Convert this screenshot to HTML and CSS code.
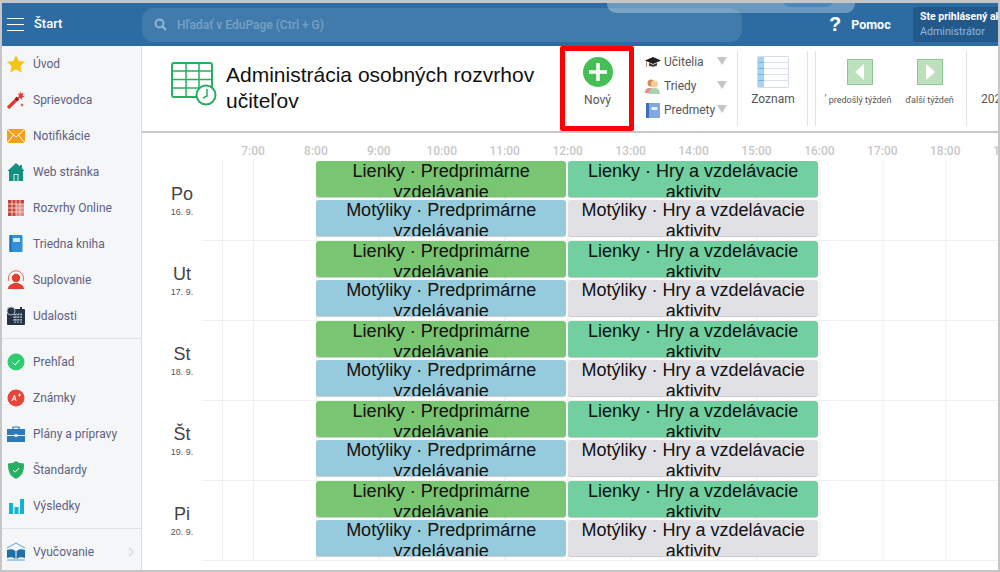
FILE: index.html
```html
<!DOCTYPE html>
<html lang="sk">
<head>
<meta charset="utf-8">
<title>Administrácia osobných rozvrhov učiteľov</title>
<link rel="stylesheet" href="styles.css">
</head>
<body>
<div class="frame">
  <header class="topbar">
    <div class="top-ghost"><div class="top-ghost-inner"></div></div>
    <div class="brand">
      <div class="burger"><span></span><span></span><span></span></div>
      <span class="brand-text">Štart</span>
    </div>
    <div class="search">
      <svg class="search-icon" width="13" height="13" viewBox="0 0 13 13"><circle cx="5.5" cy="5.5" r="4" fill="none" stroke="#93b5d1" stroke-width="2"/><path d="M8.5 8.5L12 12" stroke="#93b5d1" stroke-width="2.4"/></svg>
      <span>Hľadať v EduPage (Ctrl + G)</span>
    </div>
    <div class="help"><span class="help-q">?</span><span>Pomoc</span></div>
    <div class="user">
      <div class="user-name">Ste prihlásený ako</div>
      <div class="user-role">Administrátor</div>
    </div>
  </header>
  <div class="body">
    <nav class="sidebar">
      <div class="nav-group">
        <div class="nav-item"><svg class="ico" viewBox="0 0 20 20"><path fill="#f5c518" d="M10 1l2.7 6 6.5.7-4.9 4.3 1.4 6.5L10 15.2l-5.7 3.3 1.4-6.5L.8 7.7 7.3 7z"/></svg><span>Úvod</span></div>
        <div class="nav-item"><svg class="ico" viewBox="0 0 20 20"><path d="M2 18L12 8" stroke="#e53935" stroke-width="3.4"/><path d="M10 10l2-2" stroke="#8e1c1c" stroke-width="3.4"/><path fill="#e53935" d="M14 1l1 2.5 2.5-.5-1 2.3L18.500 7l-2.500.500L15.500 10l-1.500-2-2.500.200 1.500-2.200L12 3.500l2 .300z"/><path fill="#c0392b" d="M16 13l.6 1.400 1.400.600-1.400.600L16 17l-.6-1.400L14 15l1.400-.600z"/></svg><span>Sprievodca</span></div>
        <div class="nav-item"><svg class="ico" viewBox="0 0 20 20"><rect x="1" y="3" width="18" height="14" fill="#f6a01a"/><path d="M1 3l9 8 9-8M1 17l6.500-8M19 17l-6.500-8" fill="none" stroke="#fff" stroke-width="1"/></svg><span>Notifikácie</span></div>
        <div class="nav-item"><svg class="ico" viewBox="0 0 20 20"><path fill="#10917f" d="M10 1L1.500 9h1.500v10h14V9h1.500l-2.500-2.700V3h-2v1.500z"/><rect x="7.500" y="12" width="5" height="7" fill="#d5f0ea"/><rect x="8.500" y="13" width="3" height="6" fill="#10917f"/></svg><span>Web stránka</span></div>
        <div class="nav-item"><svg class="ico" viewBox="0 0 20 20"><rect x="2" y="2" width="16" height="16" fill="#c0453c"/><rect x="10" y="6" width="8" height="12" fill="#e9a9a3" opacity=".7"/><path d="M6 2v16M10 2v16M14 2v16M2 6h16M2 10h16M2 14h16" stroke="#f3c9c4" stroke-width="1"/></svg><span>Rozvrhy Online</span></div>
        <div class="nav-item"><svg class="ico" viewBox="0 0 20 20"><rect x="3.500" y="1" width="13" height="17" rx="1" fill="#2f8fd8"/><rect x="3.500" y="1" width="2" height="17" fill="#1f6fb0"/><rect x="7" y="4" width="7" height="4" fill="#cfe7f8"/></svg><span>Triedna kniha</span></div>
        <div class="nav-item"><svg class="ico" viewBox="0 0 20 20"><path fill="none" stroke="#e8604f" stroke-width="1" d="M3 11a7.500 7.500 0 1 1 14 0"/><circle cx="10" cy="8" r="4.200" fill="#e53e2f"/><path fill="#e53e2f" d="M2 19c0-4 4-5 6-6h4c2 1 6 2 6 6z"/></svg><span>Suplovanie</span></div>
        <div class="nav-item"><svg class="ico" viewBox="0 0 20 20"><rect x="1" y="3" width="18" height="16" rx="1" fill="#243447"/><path d="M7 8h10M7 11h10M7 14h10M4 11h0M9 8v9M12 8v9M15 8v9" stroke="#c9d3dd" stroke-width="1.200" stroke-dasharray="1.500 1"/><circle cx="5" cy="5" r="4" fill="#243447" stroke="#aab6c2"/><rect x="14" y="1" width="2" height="4" fill="#243447"/></svg><span>Udalosti</span></div>
      </div>
      <div class="nav-group nav-second">
        <div class="nav-item"><svg class="ico" viewBox="0 0 20 20"><circle cx="10" cy="10" r="8.500" fill="#2ecc71"/><path d="M6.500 10.500l2.500 2.500 4.500-5" fill="none" stroke="#fff" stroke-width="1"/></svg><span>Prehľad</span></div>
        <div class="nav-item"><svg class="ico" viewBox="0 0 20 20"><circle cx="10" cy="10" r="8.500" fill="#e8443a"/><path d="M6 13l2.500-6 1.500 6M7 11h3M12 7h3M13.500 5.500v3" fill="none" stroke="#fff" stroke-width="1"/></svg><span>Známky</span></div>
        <div class="nav-item"><svg class="ico" viewBox="0 0 20 20"><path d="M7 5V3h6v2" fill="none" stroke="#2b7bb9" stroke-width="1.200"/><rect x="1" y="5" width="18" height="6" fill="#2b7bb9"/><rect x="1" y="12" width="18" height="6" fill="#2b7bb9"/><rect x="8.500" y="10" width="3" height="3" fill="#cfe3f2"/></svg><span>Plány a prípravy</span></div>
        <div class="nav-item"><svg class="ico" viewBox="0 0 20 20"><path fill="#27ae60" d="M10 1c2.500 1.800 5 2.500 8 2.500 0 7-1 12-8 15.500C3 15.500 2 10.500 2 3.500 5 3.500 7.500 2.800 10 1z"/><path d="M7 10l2.200 2.200L13 8" fill="none" stroke="#fff" stroke-width="1"/></svg><span>Štandardy</span></div>
        <div class="nav-item"><svg class="ico" viewBox="0 0 20 20"><path fill="#10b5d6" d="M3 7h4v11H3zM8.500 11h4v7h-4zM14 3h4v15h-4z"/></svg><span>Výsledky</span></div>
      </div>
      <div class="nav-group nav-last">
        <div class="nav-item"><svg class="ico" viewBox="0 0 20 20"><path d="M1 6l9-5 9 5" fill="none" stroke="#5ea2d2" stroke-width="1"/><path fill="#1f6fa8" d="M1 8c3-1 6-1 8.500 1v8C7 15 4 15 1 16zM19 8c-3-1-6-1-8.500 1v8c2.500-2 5.500-2 8.500-1z"/><path d="M1 18h18" stroke="#5ea2d2"/></svg><span>Vyučovanie</span><svg class="chev" width="6" height="10" viewBox="0 0 6 10"><path d="M1 1l4 4-4 4" fill="none" stroke="#d4d6da" stroke-width="1.200"/></svg></div>
      </div>
    </nav>
    <main class="main">
      <section class="toolbar">
        <div class="title-block">
          <svg class="title-icon" width="46" height="44" viewBox="0 0 46 44">
            <rect x="1" y="1" width="40" height="34" rx="2" fill="none" stroke="#27ae60" stroke-width="2"/>
            <path d="M1 9h40M1 17.500h40M1 26h40M15 1v34M28 1v34" stroke="#27ae60" stroke-width="1.500"/>
            <circle cx="35" cy="33" r="9.500" fill="#fff" stroke="#27ae60" stroke-width="2"/>
            <path d="M36 27v7l-4 2" fill="none" stroke="#27ae60" stroke-width="1.500"/>
          </svg>
          <h1 class="title">Administrácia osobných rozvrhov učiteľov</h1>
        </div>
        <div class="new-btn">
          <svg width="30" height="30" viewBox="0 0 30 30"><circle cx="15" cy="15" r="15" fill="#43bf53"/><path d="M15 6v18M6 15h18" stroke="#fff" stroke-width="3.600"/></svg>
          <span>Nový</span>
        </div>
        <div class="filters">
          <div class="filter"><svg class="filter-ico" viewBox="0 0 16 16"><path fill="#1e1e1e" d="M8 3l8 3.500-8 3.500-8-3.500z"/><path fill="#3a3a3a" d="M4 9v2.500c2 1.500 6 1.500 8 0V9l-4 1.800z"/><path d="M1.500 7v6" stroke="#c98a5a"/></svg><span class="filter-label">Učitelia</span><span class="tri"></span></div>
          <div class="filter"><svg class="filter-ico" viewBox="0 0 16 16"><circle cx="6" cy="5" r="3.500" fill="#d48a5f"/><path fill="#e88a8a" d="M0 15c0-4 2-5 5-5s4 2 4 5z"/><circle cx="9.500" cy="6" r="3.500" fill="#f3cf9d"/><path fill="#a9d3ac" d="M4 16c0-4 2-6 5.500-6s5.500 2 5.500 6z"/></svg><span class="filter-label">Triedy</span><span class="tri"></span></div>
          <div class="filter"><svg class="filter-ico" viewBox="0 0 16 16"><rect x="1" y="1" width="14" height="15" fill="#7fa9e0"/><rect x="1" y="1" width="3" height="15" fill="#3f6fb5"/><rect x="6.500" y="5" width="6" height="3" fill="#e6effa"/></svg><span class="filter-label">Predmety</span><span class="tri"></span></div>
        </div>
        <div class="tool tool-list">
          <svg width="32" height="32" viewBox="0 0 32 32"><rect x=".5" y=".5" width="31" height="31" rx="1" fill="#fff" stroke="#d5dbe3"/><rect x="1" y="1" width="6" height="30" fill="#a9d3f3"/><path d="M1 6.500h30M1 12.500h30M1 18.500h30M1 24.500h30" stroke="#d9e3ee"/><path d="M1 6.500h6M1 12.500h6M1 18.500h6M1 24.500h6" stroke="#6fb1e6"/></svg>
          <span>Zoznam</span>
        </div>
        <div class="tool tool-prev">
          <svg width="26" height="26" viewBox="0 0 26 26"><rect x=".5" y=".5" width="25" height="25" fill="#bde0be" stroke="#93c297"/><path d="M17 5v16L8 13z" fill="#fff"/></svg>
          <span class="week-label"><span class="tick">'</span>predošlý týždeň</span>
        </div>
        <div class="tool tool-next">
          <svg width="26" height="26" viewBox="0 0 26 26"><rect x=".5" y=".5" width="25" height="25" fill="#bde0be" stroke="#93c297"/><path d="M9 5v16l9-8z" fill="#fff"/></svg>
          <span class="week-label">ďalší týždeň</span>
        </div>
        <div class="tool tool-year"><span>2024</span></div>
      </section>
      <section class="sheet">
        <div class="hours">
          <span>7:00</span><span>8:00</span><span>9:00</span><span>10:00</span><span>11:00</span><span>12:00</span><span>13:00</span><span>14:00</span><span>15:00</span><span>16:00</span><span>17:00</span><span>18:00</span><span>19:00</span>
        </div>
        <div class="days">
          <div class="day">
            <div class="day-label"><div class="day-name">Po</div><div class="day-date">16. 9.</div></div>
            <div class="lane">
              <div class="slot"><div class="card green">Lienky · Predprimárne vzdelávanie</div><div class="card blue">Motýliky · Predprimárne vzdelávanie</div></div>
              <div class="slot"><div class="card teal">Lienky · Hry a vzdelávacie aktivity</div><div class="card gray">Motýliky · Hry a vzdelávacie aktivity</div></div>
            </div>
          </div>
          <div class="day">
            <div class="day-label"><div class="day-name">Ut</div><div class="day-date">17. 9.</div></div>
            <div class="lane">
              <div class="slot"><div class="card green">Lienky · Predprimárne vzdelávanie</div><div class="card blue">Motýliky · Predprimárne vzdelávanie</div></div>
              <div class="slot"><div class="card teal">Lienky · Hry a vzdelávacie aktivity</div><div class="card gray">Motýliky · Hry a vzdelávacie aktivity</div></div>
            </div>
          </div>
          <div class="day">
            <div class="day-label"><div class="day-name">St</div><div class="day-date">18. 9.</div></div>
            <div class="lane">
              <div class="slot"><div class="card green">Lienky · Predprimárne vzdelávanie</div><div class="card blue">Motýliky · Predprimárne vzdelávanie</div></div>
              <div class="slot"><div class="card teal">Lienky · Hry a vzdelávacie aktivity</div><div class="card gray">Motýliky · Hry a vzdelávacie aktivity</div></div>
            </div>
          </div>
          <div class="day">
            <div class="day-label"><div class="day-name">Št</div><div class="day-date">19. 9.</div></div>
            <div class="lane">
              <div class="slot"><div class="card green">Lienky · Predprimárne vzdelávanie</div><div class="card blue">Motýliky · Predprimárne vzdelávanie</div></div>
              <div class="slot"><div class="card teal">Lienky · Hry a vzdelávacie aktivity</div><div class="card gray">Motýliky · Hry a vzdelávacie aktivity</div></div>
            </div>
          </div>
          <div class="day">
            <div class="day-label"><div class="day-name">Pi</div><div class="day-date">20. 9.</div></div>
            <div class="lane">
              <div class="slot"><div class="card green">Lienky · Predprimárne vzdelávanie</div><div class="card blue">Motýliky · Predprimárne vzdelávanie</div></div>
              <div class="slot"><div class="card teal">Lienky · Hry a vzdelávacie aktivity</div><div class="card gray">Motýliky · Hry a vzdelávacie aktivity</div></div>
            </div>
          </div>
        </div>
      </section>
    </main>
  </div>
</div>
</body>
</html>
```
FILE: styles.css
```css
* { box-sizing: border-box; }
html, body { margin: 0; height: 100%; overflow: hidden; }
body { font-family: Roboto, "Liberation Sans", sans-serif; background: #fff; }
.frame {
  width: 1000px; height: 572px; display: flex; flex-direction: column; overflow: hidden;
  border: solid #c6c6c6; border-width: 3px 2px 2px 2px; background: #fff;
}
.topbar {
  position: relative; flex: none; height: 43px; background: #2c6ca3; display: flex; align-items: center; color: #fff;
}
.top-ghost {
  position: absolute; left: 605px; top: -3px; width: 248px; height: 13px;
  background: rgba(255,255,255,.3); border-radius: 0 0 9px 9px;
}
.top-ghost-inner {
  position: absolute; left: 176px; top: 0; width: 50px; height: 7px; background: #4f86bd; border-radius: 0 0 8px 8px;
}
.brand { width: 140px; flex: none; display: flex; align-items: center; padding-left: 5px; gap: 10px; }
.burger { width: 17px; display: flex; flex-direction: column; gap: 4.500px; }
.burger span { height: 1.500px; background: #fff; display: block; }
.brand-text { font-size: 13px; font-weight: 500; position: relative; top: -1px; }
.search {
  flex: none; width: 600px; height: 34px; background: rgba(255,255,255,.1); border-radius: 12px;
  display: flex; align-items: center; gap: 10px; padding-left: 12px; font-size: 12px; font-weight: 500; color: rgba(255,255,255,.3);
}
.help { display: flex; align-items: center; gap: 10px; margin-left: 87px; font-size: 12.500px; font-weight: 700; width: 84px; flex: none; }
.help-q { font-size: 20px; font-family: "Liberation Sans", sans-serif; }
.user { flex: none; width: 87px; height: 35px; background: #23598a; border-radius: 3px 0 0 3px; padding: 4px 0 0 7px; white-space: nowrap; overflow: hidden; }
.user-name { font-size: 10.500px; font-weight: 700; line-height: 12px; }
.user-role { font-size: 10.700px; line-height: 14px; margin-top: 2px; color: #8cb8dd; }
.body { flex: 1; display: flex; min-height: 0; }
.sidebar {
  flex: none; width: 140px; background: #f5f6f8; border-right: 1px solid #dcdcdc; overflow: hidden;
}
.nav-group { padding-bottom: 4px; border-bottom: 1px solid #e0e1e3; margin-bottom: 5px; }
.nav-second { padding-bottom: 4px; }
.nav-last { border-bottom: 0; }
.nav-item { height: 36px; display: flex; align-items: center; padding-left: 4px; gap: 7px; font-size: 12px; color: #5e6180; position: relative; }
.ico { width: 20px; height: 20px; flex: none; }
.chev { position: absolute; left: 126px; top: 13px; }
.main { flex: 1; min-width: 0; display: flex; flex-direction: column; }
.toolbar {
  flex: none; height: 87px; display: flex; border-bottom: 2px solid #c8c8c8; font-size: 12px; color: #555;
}
.title-block { flex: none; width: 418px; display: flex; align-items: flex-start; padding: 16px 0 0 29px; gap: 9px; }
.title-icon { flex: none; }
.title { margin: 0; font: 400 21px/26px "Liberation Sans", sans-serif; color: #111; width: 320px; }
.new-btn {
  flex: none; width: 74px; height: 85px; border: 5px solid #f00; border-radius: 2px;
  display: flex; flex-direction: column; align-items: center; padding: 6px 0 0 1px; gap: 6px; color: #555;
}
.filters { flex: none; width: 104px; border-right: 1px solid #e3e3e3; margin: 5px 0; padding: 0 0 0 11px; display: flex; flex-direction: column; }
.filter { height: 24px; display: flex; align-items: center; gap: 3px; position: relative; color: #555; }
.filter:first-child { margin-top: -1px; }
.filter-ico { width: 16px; height: 16px; flex: none; }
.filter-label { flex: none; }
.tri {
  position: absolute; left: 72px; top: 7px; width: 0; height: 0;
  border: solid transparent; border-width: 8px 5px 0 5px; border-top-color: #c6c6c6;
}
.tool { flex: none; display: flex; flex-direction: column; align-items: center; margin: 5px 0; }
.tool-list { width: 70px; border-right: 1px solid #e3e3e3; padding: 5px 0 0 1px; gap: 4px; }
.tool-prev { width: 90px; margin-left: 7px; border-left: 1px solid #e3e3e3; padding: 8px 1px 0 0; gap: 8px; }
.tool-next { width: 62px; border-right: 1px solid #e3e3e3; padding: 8px 12px 0 0; gap: 8px; }
.tool-year { padding: 41px 0 0 14px; color: #555; }
.week-label { font-size: 9px; line-height: 14px; white-space: nowrap; position: relative; }
.tick { position: absolute; left: -4px; top: -1px; font-size: 10px; }
.sheet { flex: 1; min-height: 0; overflow: hidden; }
.hours { height: 27px; display: flex; padding-left: 79.500px; white-space: nowrap; }
.hours span { flex: none; width: 62.940px; text-align: center; font-size: 12px; font-weight: 500; color: #c8c8c8; line-height: 37px; }
.days { display: flex; flex-direction: column; }
.day { flex: none; height: 80px; display: flex; }
.day-label { flex: none; width: 80px; margin-right: -20px; text-align: center; padding-top: 23px; color: #444; font-family: "Liberation Sans", sans-serif; }
.day-name { font-size: 18px; line-height: 22px; }
.day-date { font-size: 9px; line-height: 12px; margin-top: 1px; color: #555; }
.lane {
  flex: 1; min-width: 0; height: 81px; display: flex; gap: 1.700px; padding: 1px 0 0 114px;
  border-bottom: 1px solid #f0f0f0;
  background:
    linear-gradient(#f0f0f0, #f0f0f0) 20px 0 / 1px 100% no-repeat,
    linear-gradient(to right, #f0f0f0 1px, transparent 1px) 51px 0 / 62.940px 100% repeat-x;
}
.slot { flex: none; width: 250.300px; display: flex; flex-direction: column; gap: 3px; }
.card {
  height: 36px; overflow: hidden; border-radius: 3px; text-align: center; color: #111;
  font: 18px/21px "Liberation Sans", sans-serif; padding: 0 10px;
  box-shadow: 0 1px 1px rgba(0,0,0,.22);
}
.green { background: #78c671; }
.teal { background: #72cf9f; }
.blue { background: #95cbdc; }
.gray { background: #e0e0e5; }
```
